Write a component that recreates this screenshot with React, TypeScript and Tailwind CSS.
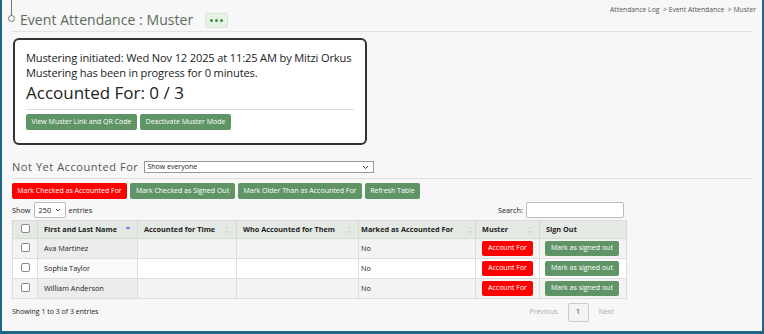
import React from 'react';

const rows = [
  { name: 'Ava Martinez' },
  { name: 'Sophia Taylor' },
  { name: 'William Anderson' },
];

const SortIcon = ({ active }: { active?: boolean }) => (
  <svg width="6" height="10" viewBox="0 0 6 10" className="shrink-0">
    <path d="M3 1 L5.5 4 L0.5 4 Z" fill={active ? '#6a7fd6' : '#d6dbd6'} />
    {!active && <path d="M3 9 L5.5 6 L0.5 6 Z" fill="#d6dbd6" />}
  </svg>
);

const Box = () => (
  <span className="inline-block h-[9px] w-[9px] rounded-[2px] border border-[#8a8a8a] bg-white" />
);

export default function App() {
  return (
    <div
      className="h-[334px] w-[764px] overflow-hidden border-x-2 border-b-[3px] border-[#1f6587] bg-[#f7f7f7] text-[#222]"
      style={{ fontFamily: '"Open Sans", "Liberation Sans", sans-serif' }}
    >
      <div className="relative px-[10px]">
        {/* timeline marker */}
        <div className="absolute left-[9px] top-0 h-[16px] w-px bg-[#6d7d6d]" />
        <div className="absolute left-[6px] top-[15px] h-[7px] w-[7px] rounded-full border border-[#6d7d6d] bg-[#f7f7f7]" />

        <div className="flex items-start justify-between border-b border-[#e2e2e2] pb-[1px]">
          <div className="flex items-center gap-[12px] pl-[8px] pt-[10px]">
            <span className="text-[14px] leading-[20px] tracking-[0.05px] text-[#5c6b5c]">
              Event Attendance : Muster
            </span>
            <span className="flex h-[15px] w-[23px] items-center justify-center gap-[2px] rounded-[2px] border border-[#d5e6d5] bg-[#e5f2e5]">
              <span className="h-[3px] w-[3px] rounded-full bg-[#3f8f45]" />
              <span className="h-[3px] w-[3px] rounded-full bg-[#3f8f45]" />
              <span className="h-[3px] w-[3px] rounded-full bg-[#3f8f45]" />
            </span>
          </div>
          <div className="-mr-[4px] pt-[5px] text-[6.8px] text-[#555]">
            Attendance Log &nbsp;&gt; Event Attendance &nbsp;&gt; Muster
          </div>
        </div>

        {/* muster card */}
        <div className="ml-[1px] mt-[6px] w-[354px] rounded-[6px] border-2 border-[#333] bg-white px-[11px] pb-[13px] pt-[10px]">
          <div className="text-[11.1px] leading-[15px] tracking-[-0.15px]">
            Mustering initiated: Wed Nov 12 2025 at 11:25 AM by Mitzi Orkus
          </div>
          <div className="text-[11.1px] leading-[15px] tracking-[-0.15px]">
            Mustering has been in progress for 0 minutes.
          </div>
          <div className="mt-[2px] text-[17px] leading-[22px]">Accounted For: 0 / 3</div>
          <div className="mt-[5px] border-t border-[#dcdcdc]" />
          <div className="mt-[4px] flex gap-[3px]">
            <button className="h-[16px] w-[111px] rounded-[2px] bg-[#5e9466] text-[7px] text-white">
              View Muster Link and QR Code
            </button>
            <button className="h-[16px] w-[91px] rounded-[2px] bg-[#5e9466] text-[7px] text-white">
              Deactivate Muster Mode
            </button>
          </div>
        </div>

        {/* section header */}
        <div className="mt-[15px] flex items-center gap-[6px] border-b border-[#e0e0e0] pb-[4px]">
          <span className="text-[11px] leading-[14px] tracking-[0.55px] text-[#555]">
            Not Yet Accounted For
          </span>
          <div className="flex h-[12px] w-[230px] items-center justify-between border border-[#999] bg-white pl-[2px] pr-[4px] text-[7px]">
            <span>Show everyone</span>
            <svg width="7" height="5" viewBox="0 0 7 5">
              <path d="M1 1 L3.5 3.5 L6 1" stroke="#333" strokeWidth="1" fill="none" />
            </svg>
          </div>
        </div>

        {/* action buttons */}
        <div className="mt-[4px] flex gap-[3px]">
          <button className="h-[16px] w-[115px] rounded-[2px] bg-[#ff0000] text-[7px] text-white">
            Mark Checked as Accounted For
          </button>
          <button className="h-[16px] w-[105px] rounded-[2px] bg-[#5e9466] text-[7px] text-white">
            Mark Checked as Signed Out
          </button>
          <button className="h-[16px] w-[124px] rounded-[2px] bg-[#5e9466] text-[7px] text-white">
            Mark Older Than as Accounted For
          </button>
          <button className="h-[16px] w-[55px] rounded-[2px] bg-[#5e9466] text-[7px] text-white">
            Refresh Table
          </button>
        </div>

        {/* table controls */}
        <div className="mt-[3px] flex w-[612px] items-center justify-between text-[7.3px]">
          <div className="flex items-center gap-[3px]">
            <span>Show</span>
            <div className="flex h-[16px] w-[32px] items-center justify-between rounded-[2px] border border-[#bbb] bg-white px-[4px]">
              <span>250</span>
              <svg width="6" height="4" viewBox="0 0 6 4">
                <path d="M1 1 L3 3 L5 1" stroke="#444" strokeWidth="0.9" fill="none" />
              </svg>
            </div>
            <span>entries</span>
          </div>
          <div className="flex items-center gap-[3px]">
            <span>Search:</span>
            <div className="h-[16px] w-[98px] rounded-[2px] border border-[#bbb] bg-white" />
          </div>
        </div>

        {/* table */}
        <table className="mt-[2px] w-[614px] table-fixed border-collapse text-[7.3px]">
          <colgroup>
            <col className="w-[25px]" />
            <col className="w-[100px]" />
            <col className="w-[99px]" />
            <col className="w-[122px]" />
            <col className="w-[117px]" />
            <col className="w-[64px]" />
            <col className="w-[87px]" />
          </colgroup>
          <thead>
            <tr className="h-[18px] bg-[#e4e9e4] text-left font-bold">
              <th className="border border-[#d8d8d8] text-center"><Box /></th>
              <th className="border border-[#d8d8d8] px-[6px]">
                <div className="flex items-center justify-between">First and Last Name <SortIcon active /></div>
              </th>
              <th className="border border-[#d8d8d8] px-[6px]">
                <div className="flex items-center justify-between">Accounted for Time <SortIcon /></div>
              </th>
              <th className="border border-[#d8d8d8] px-[6px]">
                <div className="flex items-center justify-between">Who Accounted for Them <SortIcon /></div>
              </th>
              <th className="border border-[#d8d8d8] px-[2px]">
                <div className="flex items-center justify-between">Marked as Accounted For <SortIcon /></div>
              </th>
              <th className="border border-[#d8d8d8] px-[6px]">
                <div className="flex items-center justify-between">Muster <SortIcon /></div>
              </th>
              <th className="border border-[#d8d8d8] px-[6px]">Sign Out</th>
            </tr>
          </thead>
          <tbody>
            {rows.map((r, i) => (
              <tr key={r.name} className={`h-[20px] ${i % 2 === 0 ? 'bg-[#f3f3f3]' : 'bg-white'}`}>
                <td className="border border-[#dedede] text-center"><Box /></td>
                <td className={`border border-[#dedede] px-[6px] ${i % 2 === 0 ? 'bg-[#ececec]' : 'bg-[#f9f9f9]'}`}>{r.name}</td>
                <td className="border border-[#dedede]" />
                <td className="border border-[#dedede]" />
                <td className="border border-[#dedede] px-[2px]">No</td>
                <td className="border border-[#dedede] px-[6px]">
                  <button className="h-[15px] w-[51px] rounded-[2px] bg-[#ff0000] text-[7px] text-white">Account For</button>
                </td>
                <td className="border border-[#dedede] px-[5px]">
                  <button className="h-[15px] w-[74px] rounded-[2px] bg-[#5e9466] text-[7px] text-white">Mark as signed out</button>
                </td>
              </tr>
            ))}
          </tbody>
        </table>

        {/* footer */}
        <div className="mt-[4px] flex w-[614px] items-center justify-between text-[7px]">
          <span>Showing 1 to 3 of 3 entries</span>
          <div className="flex items-center gap-[10px] pr-[12px] text-[#aaa]">
            <span>Previous</span>
            <span className="flex h-[19px] w-[21px] items-center justify-center rounded-[2px] border border-[#ccc] bg-[#f3f3f3] text-[#333]">1</span>
            <span>Next</span>
          </div>
        </div>
      </div>
    </div>
  );
}
